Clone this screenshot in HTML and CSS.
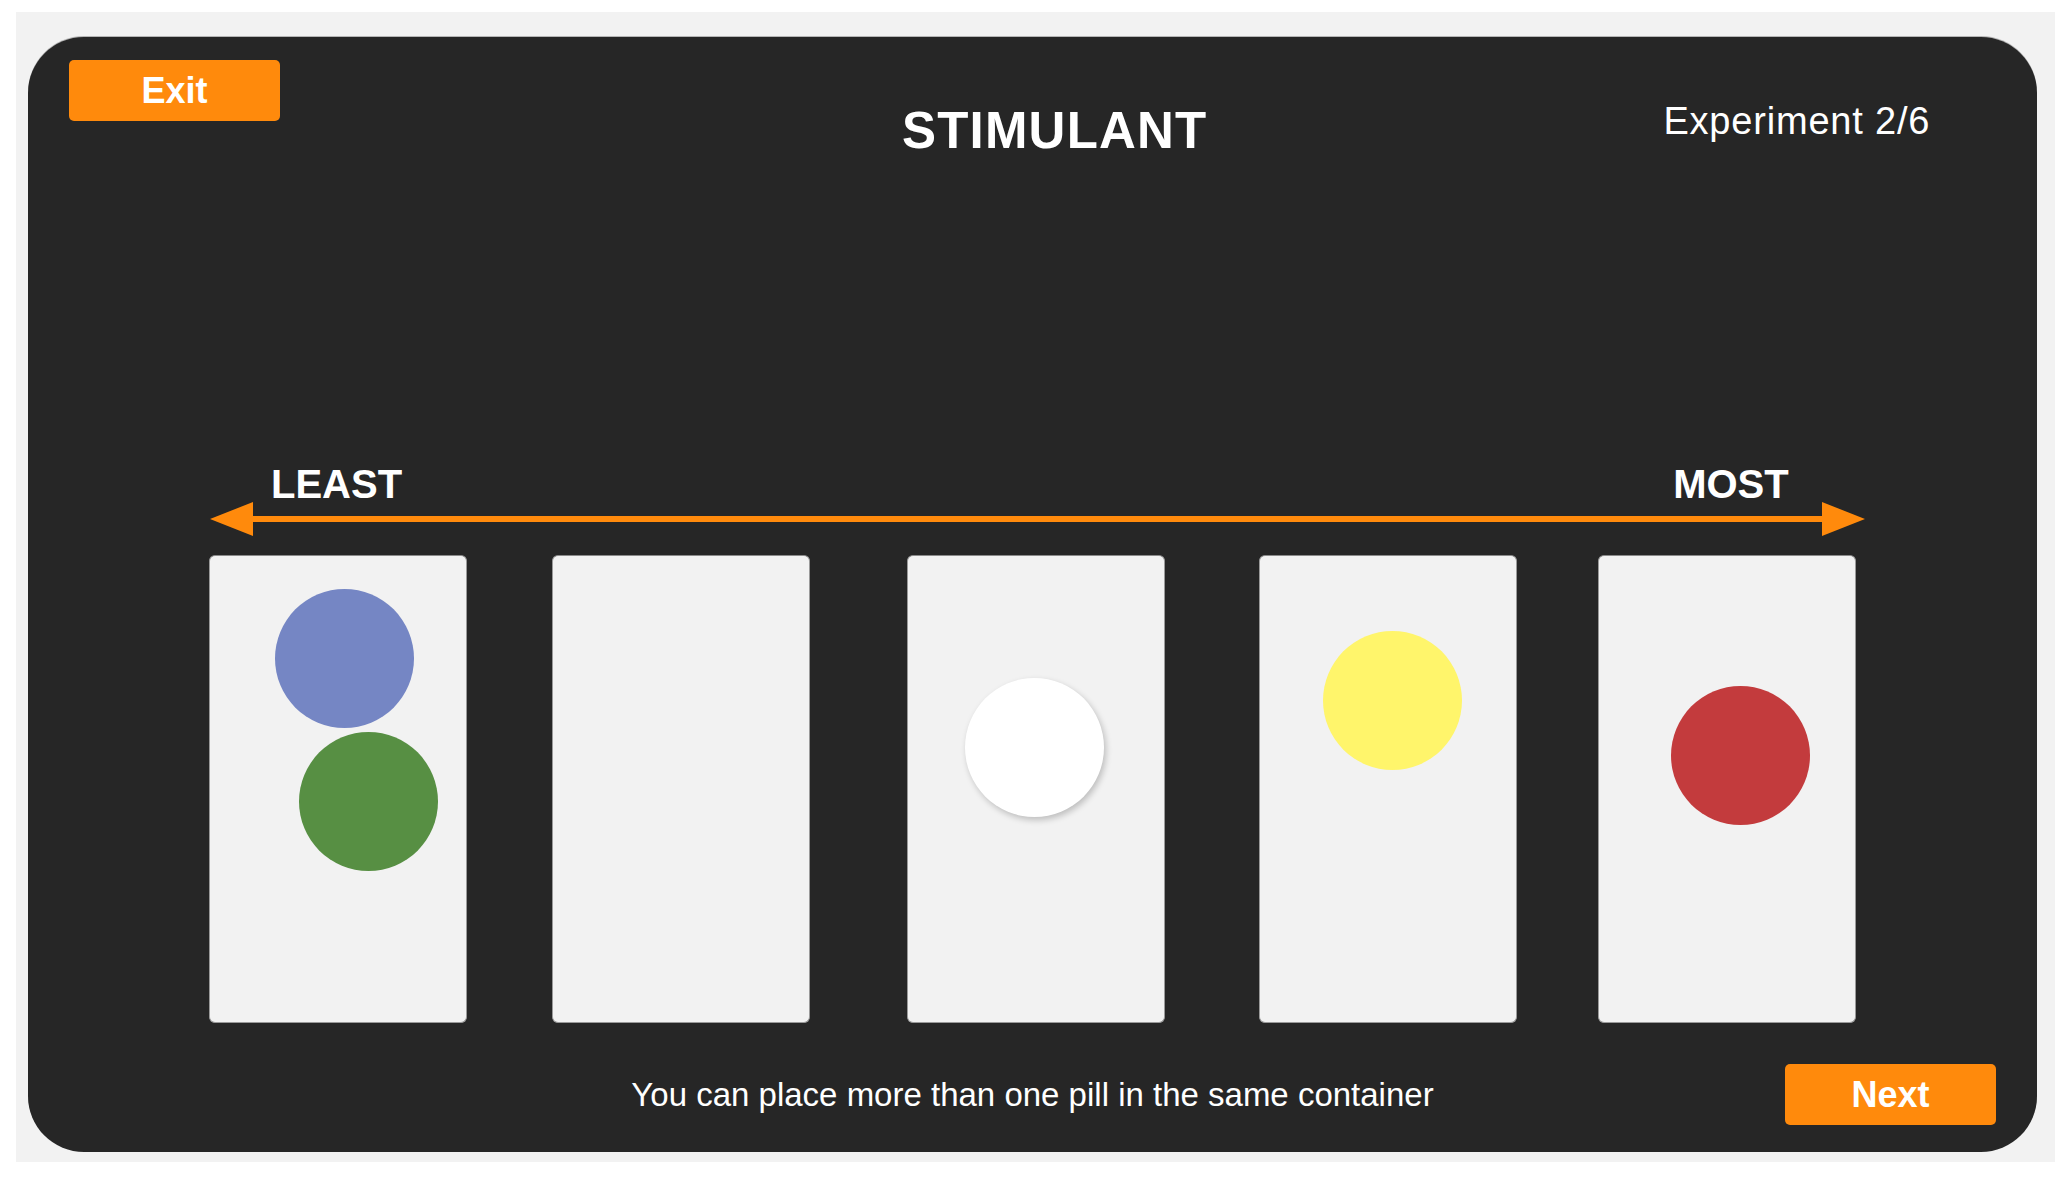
FILE: index.html
```html
<!DOCTYPE html>
<html lang="en">
<head>
<meta charset="utf-8">
<title>Stimulant - Experiment 2/6</title>
<link rel="stylesheet" href="styles.css">
</head>
<body>
<div class="frame">
  <div class="panel">
    <div class="header">
      <button class="btn btn-exit">Exit</button>
      <h1 class="title">STIMULANT</h1>
      <div class="progress">Experiment 2/6</div>
    </div>
    <div class="labels">
      <span class="label label-least">LEAST</span>
      <span class="label label-most">MOST</span>
    </div>
    <svg class="arrow" width="1655" height="34" viewBox="0 0 1655 34" aria-hidden="true">
      <rect x="30" y="14" width="1595" height="6" fill="#ff8a0c"/>
      <polygon points="0,17 43,0 43,34" fill="#ff8a0c"/>
      <polygon points="1655,17 1612,0 1612,34" fill="#ff8a0c"/>
    </svg>
    <div class="bins">
      <div class="bin bin-1">
        <div class="pill pill-blue"></div>
        <div class="pill pill-green"></div>
      </div>
      <div class="bin bin-2"></div>
      <div class="bin bin-3">
        <div class="pill pill-white"></div>
      </div>
      <div class="bin bin-4">
        <div class="pill pill-yellow"></div>
      </div>
      <div class="bin bin-5">
        <div class="pill pill-red"></div>
      </div>
    </div>
    <div class="footer">
      <span></span>
      <p class="hint">You can place more than one pill in the same container</p>
      <button class="btn btn-next">Next</button>
    </div>
  </div>
</div>
</body>
</html>
```
FILE: styles.css
```css
html, body {
  margin: 0;
  padding: 0;
  background: #ffffff;
}

body {
  font-family: "Liberation Sans", Arial, sans-serif;
  color: #ffffff;
}

.frame {
  box-sizing: border-box;
  width: 2039px;
  height: 1150px;
  margin: 12px 0 0 16px;
  padding: 25px 18px 10px 12px;
  background: #f2f2f2;
}

.panel {
  box-sizing: border-box;
  width: 2009px;
  height: 1115px;
  background: #262626;
  border-radius: 56px;
  box-shadow: 0 -1px 0 #b5b5b5;
  display: flex;
  flex-direction: column;
}

.header {
  display: flex;
  align-items: flex-start;
  padding: 23px 0 0 41px;
  height: 96px;
}

.btn {
  box-sizing: border-box;
  width: 211px;
  height: 61px;
  border: none;
  border-radius: 5px;
  background: #ff8a0c;
  color: #ffffff;
  font-family: "Liberation Sans", Arial, sans-serif;
  font-weight: bold;
  font-size: 36px;
  line-height: 61px;
  padding: 0;
  text-align: center;
}

.title {
  margin: 45px 0 0 622px;
  font-size: 51px;
  line-height: 51px;
  letter-spacing: 1.2px;
  font-weight: bold;
}

.progress {
  margin: 42px 0 0 456px;
  font-size: 38px;
  line-height: 38px;
  letter-spacing: 0.8px;
}

.labels {
  display: flex;
  margin-top: 312px;
  height: 32px;
  padding-left: 243px;
}

.label {
  font-size: 40px;
  line-height: 32px;
  font-weight: bold;
}

.label-most {
  margin-left: 1271px;
}

.arrow {
  display: block;
  margin-top: 2px;
  margin-left: 182px;
}

.bins {
  display: flex;
  margin-top: 19px;
  padding-left: 181px;
  height: 468px;
}

.bin {
  position: relative;
  box-sizing: border-box;
  width: 258px;
  height: 468px;
  background: #f2f2f2;
  border-radius: 6px;
  border: 1px solid #9a9a9a;
  border-top-color: #8a8a8a;
}

.bin-2 { margin-left: 85px; }
.bin-3 { margin-left: 97px; }
.bin-4 { margin-left: 94px; }
.bin-5 { margin-left: 81px; }

.pill {
  position: absolute;
  width: 139px;
  height: 139px;
  border-radius: 50%;
}

.pill-blue {
  left: 65px;
  top: 33px;
  background: #7586c4;
}

.pill-green {
  left: 89px;
  top: 176px;
  background: #578f43;
}

.pill-white {
  left: 57px;
  top: 122px;
  background: #ffffff;
  box-shadow: 2px 3px 6px rgba(0, 0, 0, 0.22);
}

.pill-yellow {
  left: 63px;
  top: 75px;
  background: #fff56b;
}

.pill-red {
  left: 72px;
  top: 130px;
  background: #c33b3d;
}

.footer {
  display: grid;
  grid-template-columns: 1fr auto 1fr;
  align-items: center;
  margin-top: 41px;
  padding: 0 41px;
}

.hint {
  margin: 0;
  font-size: 33px;
  line-height: 40px;
  color: #ffffff;
}

.btn-next {
  justify-self: end;
}
```
